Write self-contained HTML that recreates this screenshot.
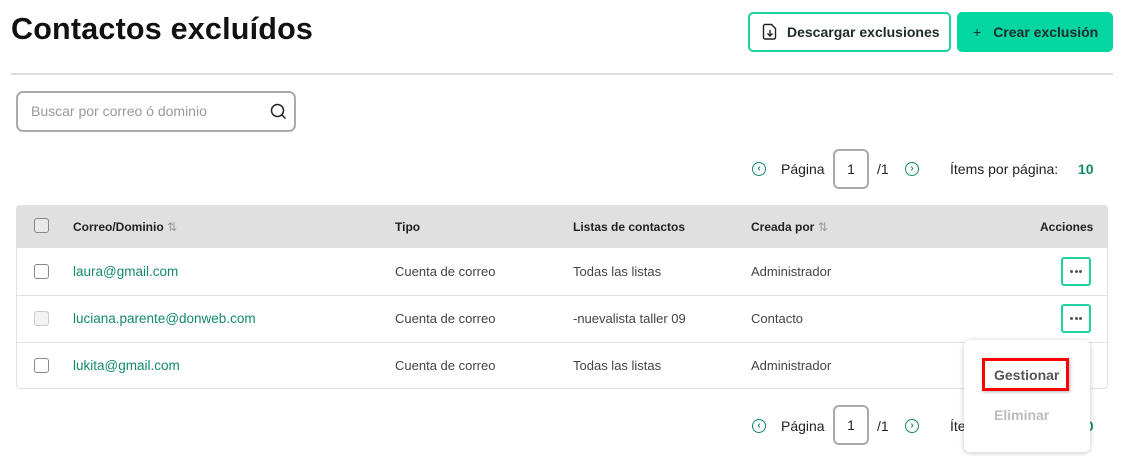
<!DOCTYPE html>
<html><head><meta charset="utf-8"><style>
*{box-sizing:border-box;margin:0;padding:0}
body{width:1128px;height:456px;overflow:hidden;background:#fff;font-family:"Liberation Sans","DejaVu Sans",sans-serif;position:relative;color:#222}
.a{position:absolute}
.t{font-size:13px;color:#444}
.g{color:#138a6a;font-size:13.5px}
.cb{width:15px;height:15px;border:1.5px solid #888;border-radius:3px;background:#fff}
.h{font-size:12px;font-weight:bold;color:#222}
.dots{width:30px;height:29px;border:2px solid #1fd3a0;border-radius:3px;display:flex;align-items:center;justify-content:center;gap:1.5px}
.dots i{width:3px;height:3px;border-radius:50%;background:#555;display:block}
.line{left:16px;width:1091px;height:1px;background:#e2e2e2}
.pg{font-size:14px;color:#222}
.arr{width:14px;height:14px;border:1.5px solid #138a6a;border-radius:50%;color:#138a6a;font-size:10px;line-height:11px;text-align:center;font-weight:bold}
.pb{width:36px;height:40px;border:2px solid #aaa;border-radius:6px;text-align:center;line-height:36px;font-size:14px}
</style></head><body>
<div class="a" style="left:11px;top:12px;font-size:30.5px;font-weight:bold;color:#111;letter-spacing:0.2px">Contactos excluídos</div>
<div class="a" style="left:748px;top:12px;width:203px;height:40px;border:2px solid #1fd3a0;border-radius:5px;font-size:14px;font-weight:bold;color:#1d2b2a;line-height:36px;padding-left:37px">Descargar exclusiones</div>
<svg class="a" style="left:762px;top:23px" width="16" height="17" viewBox="0 0 16 17"><path d="M3 1.5h6.5l4 4v9a1.5 1.5 0 0 1-1.5 1.5H3A1.5 1.5 0 0 1 1.5 14.5V3A1.5 1.5 0 0 1 3 1.5z" fill="none" stroke="#222" stroke-width="1.4"/><path d="M8 7v6M5.5 10.5 8 13l2.5-2.5" fill="none" stroke="#222" stroke-width="1.4"/></svg>
<div class="a" style="left:957px;top:12px;width:156px;height:40px;background:#03d6a0;border-radius:5px;font-size:14px;font-weight:bold;color:#1d2b2a;line-height:40px;padding-left:16px"><span style="font-weight:normal;margin-right:12px">+</span>Crear exclusión</div>
<div class="a" style="left:11px;top:73px;width:1102px;height:2px;background:#ddd"></div>
<div class="a" style="left:16px;top:91px;width:280px;height:41px;border:2px solid #aaa;border-radius:7px;font-size:14px;color:#999;line-height:37px;padding-left:13px">Buscar por correo ó dominio</div>
<svg class="a" style="left:270px;top:103px" width="17" height="17" viewBox="0 0 17 17"><circle cx="7.5" cy="7.5" r="6" fill="none" stroke="#222" stroke-width="1.5"/><path d="M12 12l3.5 3.5" stroke="#222" stroke-width="1.5"/></svg>

<div class="a arr" style="left:752px;top:162px">‹</div>
<div class="a pg" style="left:781px;top:161px">Página</div>
<div class="a pb" style="left:833px;top:149px">1</div>
<div class="a pg" style="left:877px;top:161px">/1</div>
<div class="a arr" style="left:905px;top:162px">›</div>
<div class="a pg" style="left:950px;top:161px">Ítems por página:</div>
<div class="a" style="left:1078px;top:161px;font-size:14px;font-weight:bold;color:#138a6a">10</div>

<div class="a" style="left:16px;top:205px;width:1092px;height:184px;border:1px solid #e2e2e2;border-radius:4px"></div>
<div class="a" style="left:16px;top:205px;width:1092px;height:43px;background:#e0e0e0;border-radius:4px 4px 0 0"></div>
<div class="a cb" style="left:34px;top:218px;background:#e8e8e8"></div>
<div class="a h" style="left:73px;top:220px">Correo/Dominio <span style="color:#999;font-weight:normal">⇅</span></div>
<div class="a h" style="left:395px;top:220px">Tipo</div>
<div class="a h" style="left:573px;top:220px">Listas de contactos</div>
<div class="a h" style="left:751px;top:220px">Creada por <span style="color:#999;font-weight:normal">⇅</span></div>
<div class="a h" style="left:1040px;top:220px">Acciones</div>

<div class="a line" style="top:295px"></div>
<div class="a line" style="top:342px"></div>

<div class="a cb" style="left:34px;top:264px"></div>
<div class="a g" style="left:73px;top:264px">laura@gmail.com</div>
<div class="a t" style="left:395px;top:264px">Cuenta de correo</div>
<div class="a t" style="left:573px;top:264px">Todas las listas</div>
<div class="a t" style="left:751px;top:264px">Administrador</div>
<div class="a dots" style="left:1061px;top:257px"><i></i><i></i><i></i></div>

<div class="a cb" style="left:34px;top:311px;border-color:#ccc;background:#f2f2f2"></div>
<div class="a g" style="left:73px;top:311px">luciana.parente@donweb.com</div>
<div class="a t" style="left:395px;top:311px">Cuenta de correo</div>
<div class="a t" style="left:573px;top:311px">-nuevalista taller 09</div>
<div class="a t" style="left:751px;top:311px">Contacto</div>
<div class="a dots" style="left:1061px;top:304px"><i></i><i></i><i></i></div>

<div class="a cb" style="left:34px;top:358px"></div>
<div class="a g" style="left:73px;top:358px">lukita@gmail.com</div>
<div class="a t" style="left:395px;top:358px">Cuenta de correo</div>
<div class="a t" style="left:573px;top:358px">Todas las listas</div>
<div class="a t" style="left:751px;top:358px">Administrador</div>

<div class="a arr" style="left:752px;top:419px">‹</div>
<div class="a pg" style="left:781px;top:418px">Página</div>
<div class="a pb" style="left:833px;top:405px">1</div>
<div class="a pg" style="left:877px;top:418px">/1</div>
<div class="a arr" style="left:905px;top:419px">›</div>
<div class="a pg" style="left:950px;top:418px">Ítems por página:</div>
<div class="a" style="left:1078px;top:418px;font-size:14px;font-weight:bold;color:#138a6a">10</div>

<div class="a" style="left:964px;top:340px;width:126px;height:112px;background:#fff;border-radius:6px;box-shadow:0 1px 6px rgba(0,0,0,0.22)"></div>
<div class="a" style="left:982px;top:358px;width:87px;height:33px;border:3px solid #f00;box-shadow:1px 1px 3px rgba(0,0,0,0.3)"></div>
<div class="a" style="left:994px;top:367px;font-size:14px;font-weight:bold;color:#555">Gestionar</div>
<div class="a" style="left:994px;top:407px;font-size:14px;font-weight:bold;color:#bbb">Eliminar</div>
</body></html>
